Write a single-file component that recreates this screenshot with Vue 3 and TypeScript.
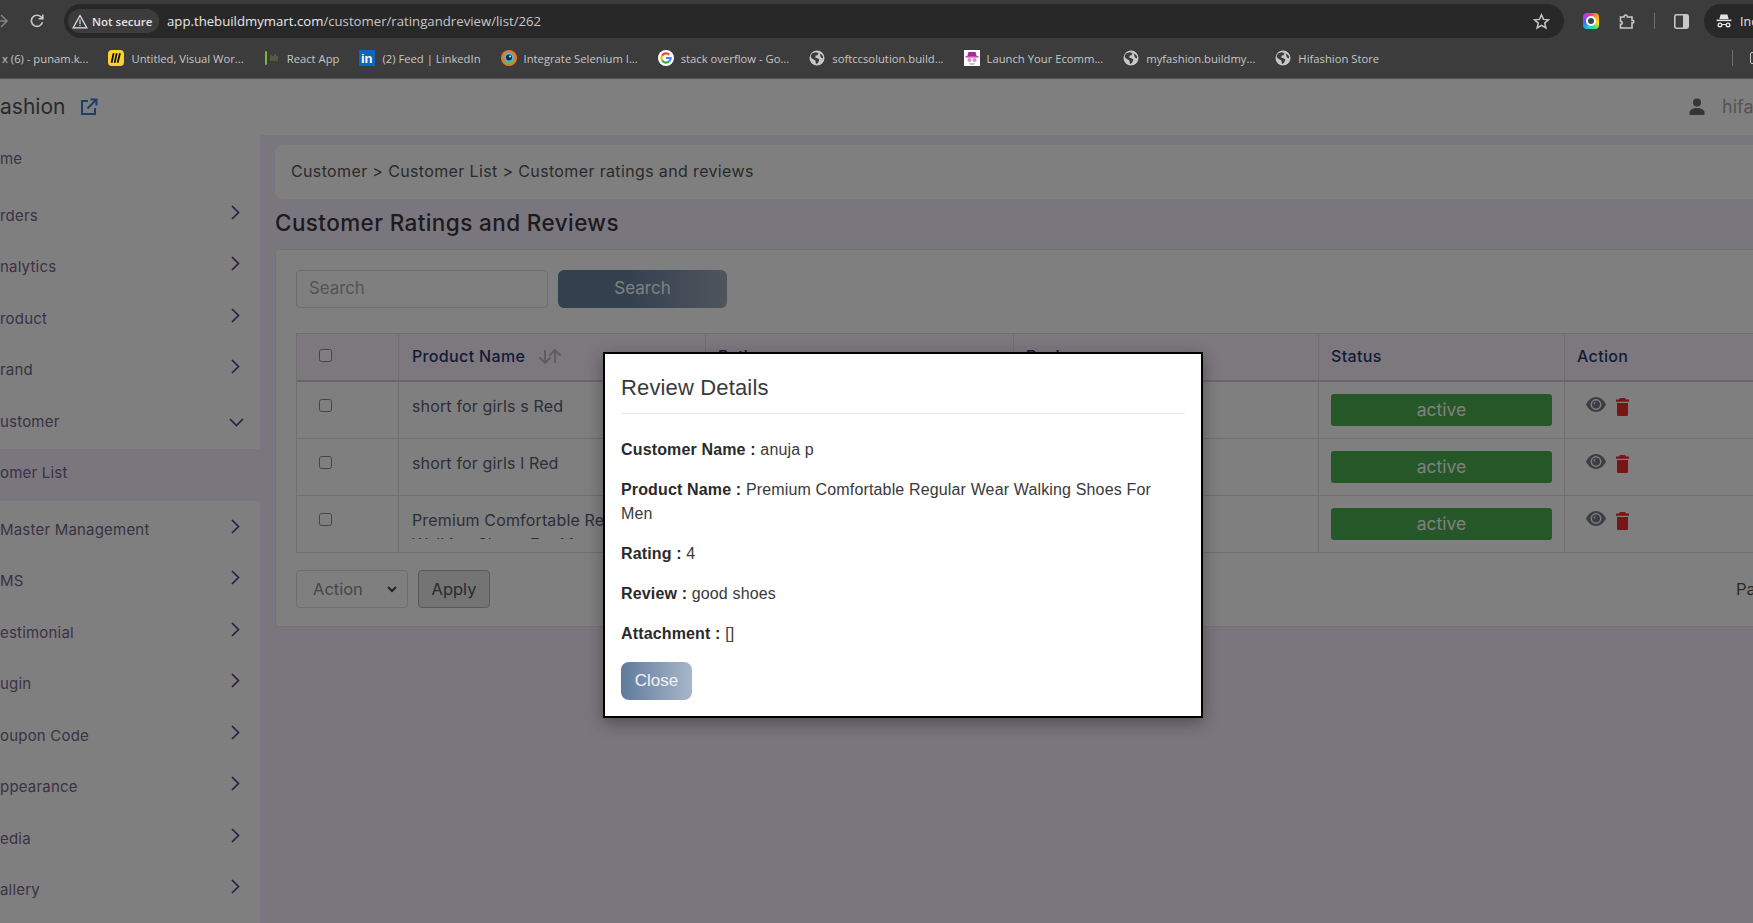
<script setup lang="ts">
interface Bookmark {
  label: string
  icon: string
}

interface MenuItem {
  label: string
  arrow: 'none' | 'right' | 'down'
  kind?: string
}

interface Row {
  product: string
}

const bookmarks: Bookmark[] = [
  { label: 'x (6) - punam.k...', icon: '' },
  { label: 'Untitled, Visual Wor...', icon: 'miro' },
  { label: 'React App', icon: 'react' },
  { label: '(2) Feed | LinkedIn', icon: 'linkedin' },
  { label: 'Integrate Selenium I...', icon: 'lens' },
  { label: 'stack overflow - Go...', icon: 'google' },
  { label: 'softccsolution.build...', icon: 'globe' },
  { label: 'Launch Your Ecomm...', icon: 'spy' },
  { label: 'myfashion.buildmy...', icon: 'globe' },
  { label: 'Hifashion Store', icon: 'globe' }
]

const menu: MenuItem[] = [
  { label: 'me', arrow: 'none', kind: 'home' },
  { label: 'rders', arrow: 'right' },
  { label: 'nalytics', arrow: 'right' },
  { label: 'roduct', arrow: 'right' },
  { label: 'rand', arrow: 'right' },
  { label: 'ustomer', arrow: 'down' },
  { label: 'omer List', arrow: 'none', kind: 'current' },
  { label: 'Master Management', arrow: 'right' },
  { label: 'MS', arrow: 'right' },
  { label: 'estimonial', arrow: 'right' },
  { label: 'ugin', arrow: 'right' },
  { label: 'oupon Code', arrow: 'right' },
  { label: 'ppearance', arrow: 'right' },
  { label: 'edia', arrow: 'right' },
  { label: 'allery', arrow: 'right' }
]

const rows: Row[] = [
  { product: 'short for girls s Red' },
  { product: 'short for girls l Red' },
  { product: 'Premium Comfortable Regular Wear Walking Shoes For Men' }
]
</script>

<template>
  <div class="screen">
    <header class="browser">
      <div class="toolbar">
        <svg class="back" width="16" height="16" viewBox="0 0 16 16" fill="none" stroke="#808080" stroke-width="1.6">
          <path d="M2 8h12M8 2l6 6-6 6" />
        </svg>
        <svg class="reload" width="16" height="16" viewBox="0 0 16 16" fill="none" stroke="#c7c7c7" stroke-width="1.6">
          <path d="M13.4 9.2A5.6 5.6 0 1 1 12 3.9L13.6 5.6" />
          <path d="M13.8 1.6v4.2H9.6" />
        </svg>
        <div class="address">
          <div class="chip">
            <svg width="16" height="15" viewBox="0 0 16 15" fill="none" stroke="#e3e3e3" stroke-width="1.3">
              <path d="M8 1.5 14.8 13.8H1.2z" />
              <path d="M8 5.5v4.4M8 10.8v1.4" stroke-width="1.1" />
            </svg>
            <span>Not secure</span>
          </div>
          <span class="url">app.thebuildmymart.com<span class="url-path">/customer/ratingandreview/list/262</span></span>
          <svg class="star" width="17" height="17" viewBox="0 0 17 17" fill="none" stroke="#c7c7c7" stroke-width="1.5">
            <path d="M8.5 1.8l2 4.6 5 .4-3.800 3.300 1.200 4.900-4.400-2.600-4.400 2.600 1.200-4.900L1.500 6.800l5-.4z" />
          </svg>
        </div>
        <div class="ext-color"><i></i></div>
        <svg class="puzzle" width="17" height="17" viewBox="0 0 17 17" fill="none" stroke="#c7c7c7" stroke-width="1.6">
          <path d="M1.5 4h3.600c-.4-2.600 3.600-2.600 3.200 0H13v3.400c2.400-.4 2.400 3 0 2.600V15H1.500v-3.600c2.300.4 2.300-3.400 0-3z" />
        </svg>
        <span class="tool-divider"></span>
        <svg class="panel" width="15" height="15" viewBox="0 0 15 15">
          <rect x="0.8" y="0.8" width="13.4" height="13.4" rx="1.6" fill="none" stroke="#c7c7c7" stroke-width="1.6" />
          <rect x="9" y="1" width="5" height="13" fill="#c7c7c7" />
        </svg>
        <div class="incognito">
          <svg width="16" height="16" viewBox="0 0 16 16" fill="#e3e3e3">
            <path d="M4.600 1.500h6.800l1.200 4.400H3.400z" />
            <rect x="0.6" y="6.6" width="14.8" height="1.5" />
            <path d="M4 9.400a2.500 2.500 0 1 1 0 5 2.500 2.500 0 0 1 0-5zm8 0a2.500 2.500 0 1 1 0 5 2.500 2.500 0 0 1 0-5zM4 10.800a1.100 1.100 0 1 0 0 2.200 1.100 1.100 0 0 0 0-2.200zm8 0a1.100 1.100 0 1 0 0 2.200 1.100 1.100 0 0 0 0-2.200zM6.400 11h3.200v1H6.400z" fill-rule="evenodd" />
          </svg>
          <span>Incognito</span>
        </div>
      </div>
      <div class="bookmarks">
        <div v-for="b in bookmarks" :key="b.label" class="bookmark">
          <span v-if="b.icon === 'miro'" class="fav fav-miro">
            <svg width="16" height="16" viewBox="0 0 16 16" fill="none" stroke="#111" stroke-width="1.8">
              <path d="M5.600 3.200 3.600 12.800M8.800 3.200 6.600 12.800M12 3.200 9.600 12.800" />
            </svg>
          </span>
          <svg v-else-if="b.icon === 'react'" class="fav" width="16" height="16" viewBox="0 0 16 16">
            <rect x="1" y="1" width="2" height="14" rx="1" fill="#7fb23a" />
            <path d="M7 5v6M9 6v5M11 4v7M13 6v5" stroke="#5a6b45" stroke-width="1.4" />
          </svg>
          <svg v-else-if="b.icon === 'linkedin'" class="fav" width="16" height="16" viewBox="0 0 16 16">
            <rect width="16" height="16" fill="#0a66c2" />
            <text x="2" y="13" font-family="Liberation Sans, sans-serif" font-size="13" font-weight="700" fill="#fff">in</text>
          </svg>
          <svg v-else-if="b.icon === 'lens'" class="fav" width="16" height="16" viewBox="0 0 16 16">
            <circle cx="8" cy="8" r="8" fill="#e07a2e" />
            <path d="M2 11a7 7 0 0 0 12 0z" fill="#7fae3c" />
            <circle cx="8" cy="7.5" r="5" fill="#4fb2d8" />
            <circle cx="8" cy="7.5" r="3" fill="#1e2b3a" />
            <circle cx="9" cy="6.5" r="1" fill="#dff3fb" />
          </svg>
          <svg v-else-if="b.icon === 'google'" class="fav" width="16" height="16" viewBox="0 0 16 16" fill="none" stroke-width="2.2">
            <circle cx="8" cy="8" r="8" fill="#fff" />
            <path d="M11.200 4.700A4.600 4.600 0 0 0 4.100 5.600" stroke="#ea4335" />
            <path d="M4.100 5.600a4.600 4.600 0 0 0 0 4.800" stroke="#fbbc05" />
            <path d="M4.100 10.400a4.600 4.600 0 0 0 7.200.8" stroke="#34a853" />
            <path d="M11.300 11.200A4.600 4.600 0 0 0 12.600 8H8" stroke="#4285f4" />
          </svg>
          <svg v-else-if="b.icon === 'globe'" class="fav" width="16" height="16" viewBox="0 0 16 16">
            <circle cx="8" cy="8" r="7.5" fill="#c7c7c7" />
            <path d="M3 3.500 6.500 2.200 9.500 3 8.600 5.200 6.600 5.600 6.200 7.600 8.400 8.200 10.400 9.600 9 13 7 14 6.400 10.600 2.600 8.200 1.600 6zM11.400 3.400 14 6.200 14 8.600 12 7.600 11 5z" fill="#3c3c3c" />
          </svg>
          <svg v-else-if="b.icon === 'spy'" class="fav" width="16" height="16" viewBox="0 0 16 16">
            <rect width="16" height="16" fill="#fff" />
            <path d="M4.500 2h7l1.200 4H3.300z" fill="#a32d9c" />
            <rect x="1.500" y="6" width="13" height="1.6" fill="#c94fb8" />
            <circle cx="5.500" cy="10" r="2" fill="#d98fd2" />
            <circle cx="10.500" cy="10" r="2" fill="#d98fd2" />
            <path d="M5 13h6l-1 2H6z" fill="#e3b3df" />
          </svg>
          <span class="bookmark-text">{{ b.label }}</span>
        </div>
        <span class="bookmark-divider"></span>
        <span class="folder"></span>
      </div>
    </header>

    <div class="page">
      <div class="topbar">
        <div class="brand">
          <span>ashion</span>
          <svg width="18" height="18" viewBox="0 0 18 18" fill="none" stroke="#2f7fe0" stroke-width="2">
            <path d="M8 3H2v13h13v-6" />
            <path d="M7.500 10.500 16 2M10.500 1.500H16.500V7.500" />
          </svg>
        </div>
        <div class="user">
          <svg width="16" height="17" viewBox="0 0 16 17" fill="#6a6a6a">
            <circle cx="8" cy="4.400" r="4" />
            <path d="M0.500 17v-2.400C0.500 11.800 4 10 8 10s7.500 1.800 7.500 4.600V17z" />
          </svg>
          <span>hifa</span>
        </div>
      </div>

      <div class="body">
        <nav class="sidebar">
          <div v-for="m in menu" :key="m.label" class="menu-item" :class="m.kind">
            <span>{{ m.label }}</span>
            <svg v-if="m.arrow === 'right'" class="chev" width="9" height="15" viewBox="0 0 9 15" fill="none" stroke="#5a3f85" stroke-width="1.7">
              <path d="M1 1l6.500 6.500L1 14" />
            </svg>
            <svg v-else-if="m.arrow === 'down'" class="chev-down" width="15" height="9" viewBox="0 0 15 9" fill="none" stroke="#5a3f85" stroke-width="1.7">
              <path d="M1 1l6.500 6.500L14 1" />
            </svg>
          </div>
        </nav>

        <main class="main">
          <div class="crumbs">Customer &gt; Customer List &gt; Customer ratings and reviews</div>
          <h1 class="title">Customer Ratings and Reviews</h1>
          <section class="card">
            <div class="search-row">
              <div class="search-input">Search</div>
              <div class="search-btn">Search</div>
            </div>

            <div class="table">
              <div class="tr th-row">
                <div class="cell"><span class="check check-head"></span></div>
                <div class="cell th">
                  Product Name
                  <svg class="sort" width="24" height="15" viewBox="0 0 24 15" fill="none" stroke="#bdbdbd" stroke-width="2">
                    <path d="M7 1v13M1.500 8.500 7 14l5.500-5.500M17 14V1M11.500 6.500 17 1l5.500 5.500" />
                  </svg>
                </div>
                <div class="cell th">Rating</div>
                <div class="cell th">Review</div>
                <div class="cell th">Status</div>
                <div class="cell th">Action</div>
              </div>
              <div v-for="r in rows" :key="r.product" class="tr">
                <div class="cell"><span class="check"></span></div>
                <div class="cell td-name"><span>{{ r.product }}</span></div>
                <div class="cell"></div>
                <div class="cell"></div>
                <div class="cell td-status"><span class="status">active</span></div>
                <div class="cell td-action">
                  <svg width="20" height="15" viewBox="0 0 20 15">
                    <path d="M0 7.500C2 3 6 0 10 0s8 3 10 7.500C18 12 14 15 10 15S2 12 0 7.500z" fill="#767c8a" />
                    <circle cx="10" cy="7.5" r="5.4" fill="#fff" />
                    <circle cx="10" cy="7.5" r="4" fill="#767c8a" />
                    <path d="M7.400 6.600A3 3 0 0 1 10 4.700 3.200 3.200 0 0 0 8.600 8 2 2 0 0 1 7.400 6.600z" fill="#fff" />
                  </svg>
                  <svg width="13" height="18" viewBox="0 0 13 18" fill="#f02a2a">
                    <path d="M4 0h5l1 1.600h3v2.200H0V1.600h3zM1 5h11v12a1 1 0 0 1-1 1H2a1 1 0 0 1-1-1z" />
                  </svg>
                </div>
              </div>
            </div>

            <div class="bulk-row">
              <div class="select">
                <span>Action</span>
                <svg width="10" height="7" viewBox="0 0 10 7" fill="none" stroke="#444" stroke-width="2">
                  <path d="M1 1l4 4 4-4" />
                </svg>
              </div>
              <div class="apply">Apply</div>
              <span class="pager">Pa</span>
            </div>
          </section>
        </main>
      </div>
    </div>

    <div class="backdrop"></div>

    <div class="modal">
      <h2 class="modal-title">Review Details</h2>
      <hr class="modal-rule" />
      <p><b>Customer Name :</b> anuja p</p>
      <p><b>Product Name :</b> Premium Comfortable Regular Wear Walking Shoes For Men</p>
      <p><b>Rating :</b> 4</p>
      <p><b>Review :</b> good shoes</p>
      <p><b>Attachment :</b> []</p>
      <div class="close">Close</div>
    </div>
  </div>
</template>

<style>
html,
body {
  margin: 0;
  overflow: hidden;
  background: #fff;
}
</style>

<style scoped>
.screen {
  position: relative;
  width: 1753px;
  height: 923px;
  overflow: hidden;
  font-family: Inter, "Open Sans", sans-serif;
}

/* browser chrome */
.browser {
  height: 79px;
  box-sizing: border-box;
  background: #3c3c3c;
  border-bottom: 1px solid #555;
  font-family: "Open Sans", "Noto Sans", sans-serif;
  color: #c7c7c7;
}
.toolbar {
  display: flex;
  align-items: center;
  height: 42px;
}
.back {
  margin-left: -7px;
  flex: none;
}
.reload {
  margin-left: 20px;
  flex: none;
}
.address {
  display: flex;
  align-items: center;
  flex: none;
  width: 1500px;
  height: 34px;
  margin-left: 19px;
  box-sizing: border-box;
  padding: 0 14px 0 4px;
  border-radius: 17px;
  background: #282828;
}
.chip {
  display: flex;
  align-items: center;
  gap: 4px;
  height: 24px;
  width: 91px;
  box-sizing: border-box;
  padding-left: 4px;
  border-radius: 12px;
  background: #3c3c3c;
  font-size: 11.5px;
  font-weight: 600;
  color: #e3e3e3;
  white-space: nowrap;
}
.url {
  margin-left: 8px;
  font-size: 13.2px;
  color: #e8e8e8;
  white-space: nowrap;
}
.url-path {
  color: #c7c7c7;
}
.star {
  margin-left: auto;
}
.ext-color {
  display: flex;
  align-items: center;
  justify-content: center;
  flex: none;
  width: 16px;
  height: 16px;
  margin-left: 19px;
  border-radius: 4px;
  background: conic-gradient(#ff3d6e, #ff9f1c, #f7e018, #3ddc84, #19c5e6, #3d6bff, #a63dff, #ff3d6e);
}
.ext-color i {
  width: 10px;
  height: 10px;
  border-radius: 50%;
  border: 2px solid #fff;
  box-sizing: border-box;
  background: #33495c;
}
.puzzle {
  margin-left: 20px;
  flex: none;
}
.tool-divider {
  width: 1px;
  height: 16px;
  margin-left: 18px;
  background: #6e6e6e;
  flex: none;
}
.panel {
  margin-left: 19px;
  flex: none;
}
.incognito {
  display: flex;
  align-items: center;
  gap: 8px;
  flex: none;
  width: 120px;
  height: 34px;
  margin-left: 15px;
  padding-left: 12px;
  border-radius: 17px 0 0 17px;
  background: #282828;
  font-size: 12.5px;
  color: #e3e3e3;
  white-space: nowrap;
}
.bookmarks {
  display: flex;
  align-items: center;
  gap: 20px;
  height: 32px;
  padding-left: 2px;
  font-size: 11.25px;
  white-space: nowrap;
  overflow: hidden;
}
.bookmark {
  display: flex;
  align-items: center;
  gap: 7px;
  flex: none;
}
.fav {
  display: block;
  flex: none;
}
.fav-miro {
  width: 16px;
  height: 16px;
  border-radius: 4px;
  background: #ffd02f;
}
.fav-miro svg {
  display: block;
}
.bookmark-divider {
  width: 1px;
  height: 16px;
  margin-left: auto;
  margin-right: -3px;
  background: #6e6e6e;
  flex: none;
}
.folder {
  width: 14px;
  height: 12px;
  margin-right: -11px;
  box-sizing: border-box;
  border: 1.5px solid #c7c7c7;
  border-radius: 2px;
  flex: none;
}

/* page under the backdrop */
.page {
  display: flex;
  flex-direction: column;
  height: 844px;
  background: #fff;
}
.topbar {
  display: flex;
  align-items: center;
  justify-content: space-between;
  flex: none;
  height: 56px;
  box-sizing: border-box;
  padding-bottom: 1px;
}
.brand {
  display: flex;
  align-items: center;
  gap: 15px;
  font-size: 21px;
  color: #555;
}
.user {
  display: flex;
  align-items: center;
  gap: 17px;
  width: 64px;
  overflow: hidden;
  flex: none;
  font-size: 18px;
  color: #aaa;
  white-space: nowrap;
}
.user svg {
  flex: none;
}
.body {
  display: flex;
  flex: 1;
  min-height: 0;
}
.sidebar {
  flex: none;
  width: 260px;
  font-size: 15px;
  letter-spacing: 0.2px;
  color: #74648c;
}
.menu-item {
  display: flex;
  align-items: center;
  justify-content: space-between;
  box-sizing: border-box;
  height: 51.5px;
  padding-right: 20px;
  white-space: nowrap;
}
.menu-item.home {
  height: 46px;
  margin-bottom: 8.3px;
}
.menu-item.current {
  height: 52px;
  margin: 2.3px 0;
  padding-bottom: 6px;
  background: #f5ecfa;
}
.chev {
  margin-bottom: 6px;
}
.chev-down {
  margin-right: -4px;
  margin-top: 2px;
}
.main {
  flex: 1;
  min-width: 0;
  overflow: hidden;
  box-sizing: border-box;
  padding: 10px 0 0 15px;
  background: #f5ecfa;
}
.crumbs {
  display: flex;
  align-items: center;
  width: 1600px;
  height: 54px;
  box-sizing: border-box;
  padding: 0 0 2px 16px;
  border-radius: 8px;
  background: #fff;
  font-size: 16px;
  letter-spacing: 0.36px;
  color: #555;
}
.title {
  margin: 6px 0 8px;
  font-size: 22.5px;
  letter-spacing: 0.4px;
  line-height: 36px;
  font-weight: 500;
  color: #3a3440;
}
.card {
  width: 1600px;
  height: 378px;
  box-sizing: border-box;
  padding: 20px 20px 0;
  background: #fff;
  border: 1px solid #e6e6e6;
  border-right: 0;
  border-radius: 3px;
}
.search-row {
  display: flex;
  gap: 10px;
  height: 38px;
}
.search-input {
  display: flex;
  align-items: center;
  width: 252px;
  box-sizing: border-box;
  padding: 0 0 2px 12px;
  border: 1px solid #d8d8d8;
  border-radius: 4px;
  font-size: 16.8px;
  color: #a8a8a8;
}
.search-btn {
  display: flex;
  align-items: center;
  justify-content: center;
  width: 169px;
  box-sizing: border-box;
  padding-bottom: 2px;
  border-radius: 6px;
  background: linear-gradient(90deg, #66829f 0%, #66829f 40%, #a0aabb 100%);
  font-size: 17px;
  color: #fff;
}
.table {
  margin-top: 25px;
  border-left: 1px solid #dedede;
}
.tr {
  display: grid;
  grid-template-columns: 102px 307px 308px 305px 246px 200px;
  height: 57px;
  box-sizing: border-box;
  border-bottom: 1px solid #dedede;
}
.th-row {
  height: 49px;
  border-top: 1px solid #dedede;
  border-bottom: 2px solid #cfcfcf;
  background: #fbf0fd;
}
.cell {
  min-width: 0;
  overflow: hidden;
  box-sizing: border-box;
  padding: 0 12px;
  border-right: 1px solid #dedede;
}
.th-row .cell {
  display: flex;
  align-items: center;
}
.th {
  padding-bottom: 2px !important;
  font-size: 16px;
  letter-spacing: 0.35px;
  font-weight: 500;
  color: #1e3a70;
}
.th:nth-child(2) {
  padding-left: 13px;
}
.sort {
  margin-left: 13px;
}
.check {
  display: block;
  width: 11px;
  height: 11px;
  margin: 17px 0 0 10px;
  border: 1px solid #8a8a8a;
  border-radius: 2.5px;
  background: #fff;
}
.check-head {
  margin: 0 0 3px 10px;
}
.td-name {
  padding: 12px 12px 0 13px;
  font-size: 16px;
  letter-spacing: 0.15px;
  line-height: 24px;
  color: #5a5e70;
}
.td-name span {
  display: block;
  max-height: 31px;
  overflow: hidden;
}
.td-status {
  padding-top: 12px;
}
.status {
  display: flex;
  align-items: center;
  justify-content: center;
  height: 32px;
  box-sizing: border-box;
  padding-bottom: 2px;
  border-radius: 3px;
  background: #4caf50;
  font-size: 17.5px;
  color: #fff;
}
.td-action {
  display: flex;
  align-items: flex-start;
  gap: 10px;
  padding: 15px 0 0 21px;
}
.td-action svg:last-child {
  margin-top: 1px;
}
.bulk-row {
  display: flex;
  align-items: center;
  gap: 10px;
  margin-top: 17px;
  height: 38px;
  font-size: 16.5px;
}
.select {
  display: flex;
  align-items: center;
  justify-content: space-between;
  width: 112px;
  height: 38px;
  box-sizing: border-box;
  padding: 0 10px 0 16px;
  border: 1px solid #dcdcdc;
  border-radius: 4px;
  color: #8c8c94;
}
.apply {
  display: flex;
  align-items: center;
  justify-content: center;
  width: 72px;
  height: 38px;
  box-sizing: border-box;
  border: 1px solid #b4b4b4;
  border-radius: 4px;
  background: #e8e8e8;
  color: #555;
}
.pager {
  margin-left: 1236px;
  color: #555;
}

/* modal */
.backdrop {
  position: absolute;
  left: 0;
  right: 0;
  top: 79px;
  bottom: 0;
  background: rgba(0, 0, 0, 0.5);
}
.modal {
  position: absolute;
  left: 603px;
  top: 352px;
  width: 600px;
  height: 366px;
  box-sizing: border-box;
  padding: 16px;
  border: 2px solid #000;
  background: #fff;
  box-shadow: 0 5px 16px rgba(0, 0, 0, 0.35);
  font-family: "Liberation Sans", Arial, sans-serif;
  font-size: 16px;
  letter-spacing: 0.15px;
  line-height: 24px;
  color: #3a3a3a;
}
.modal-title {
  margin: 2px 0 0;
  font-size: 22px;
  line-height: 32px;
  font-weight: 400;
}
.modal-rule {
  margin: 9px 0 24px;
  border: 0;
  border-top: 1px solid #e8e8e8;
}
.modal p {
  margin: 0 0 16px;
}
.modal b {
  font-weight: 700;
  color: #2a2a2a;
}
.close {
  display: flex;
  align-items: center;
  justify-content: center;
  width: 71px;
  height: 38px;
  border-radius: 8px;
  background: linear-gradient(90deg, #5f7a9c, #a8b7ca);
  font-size: 17px;
  letter-spacing: 0;
  color: #f2f2f2;
}
</style>
